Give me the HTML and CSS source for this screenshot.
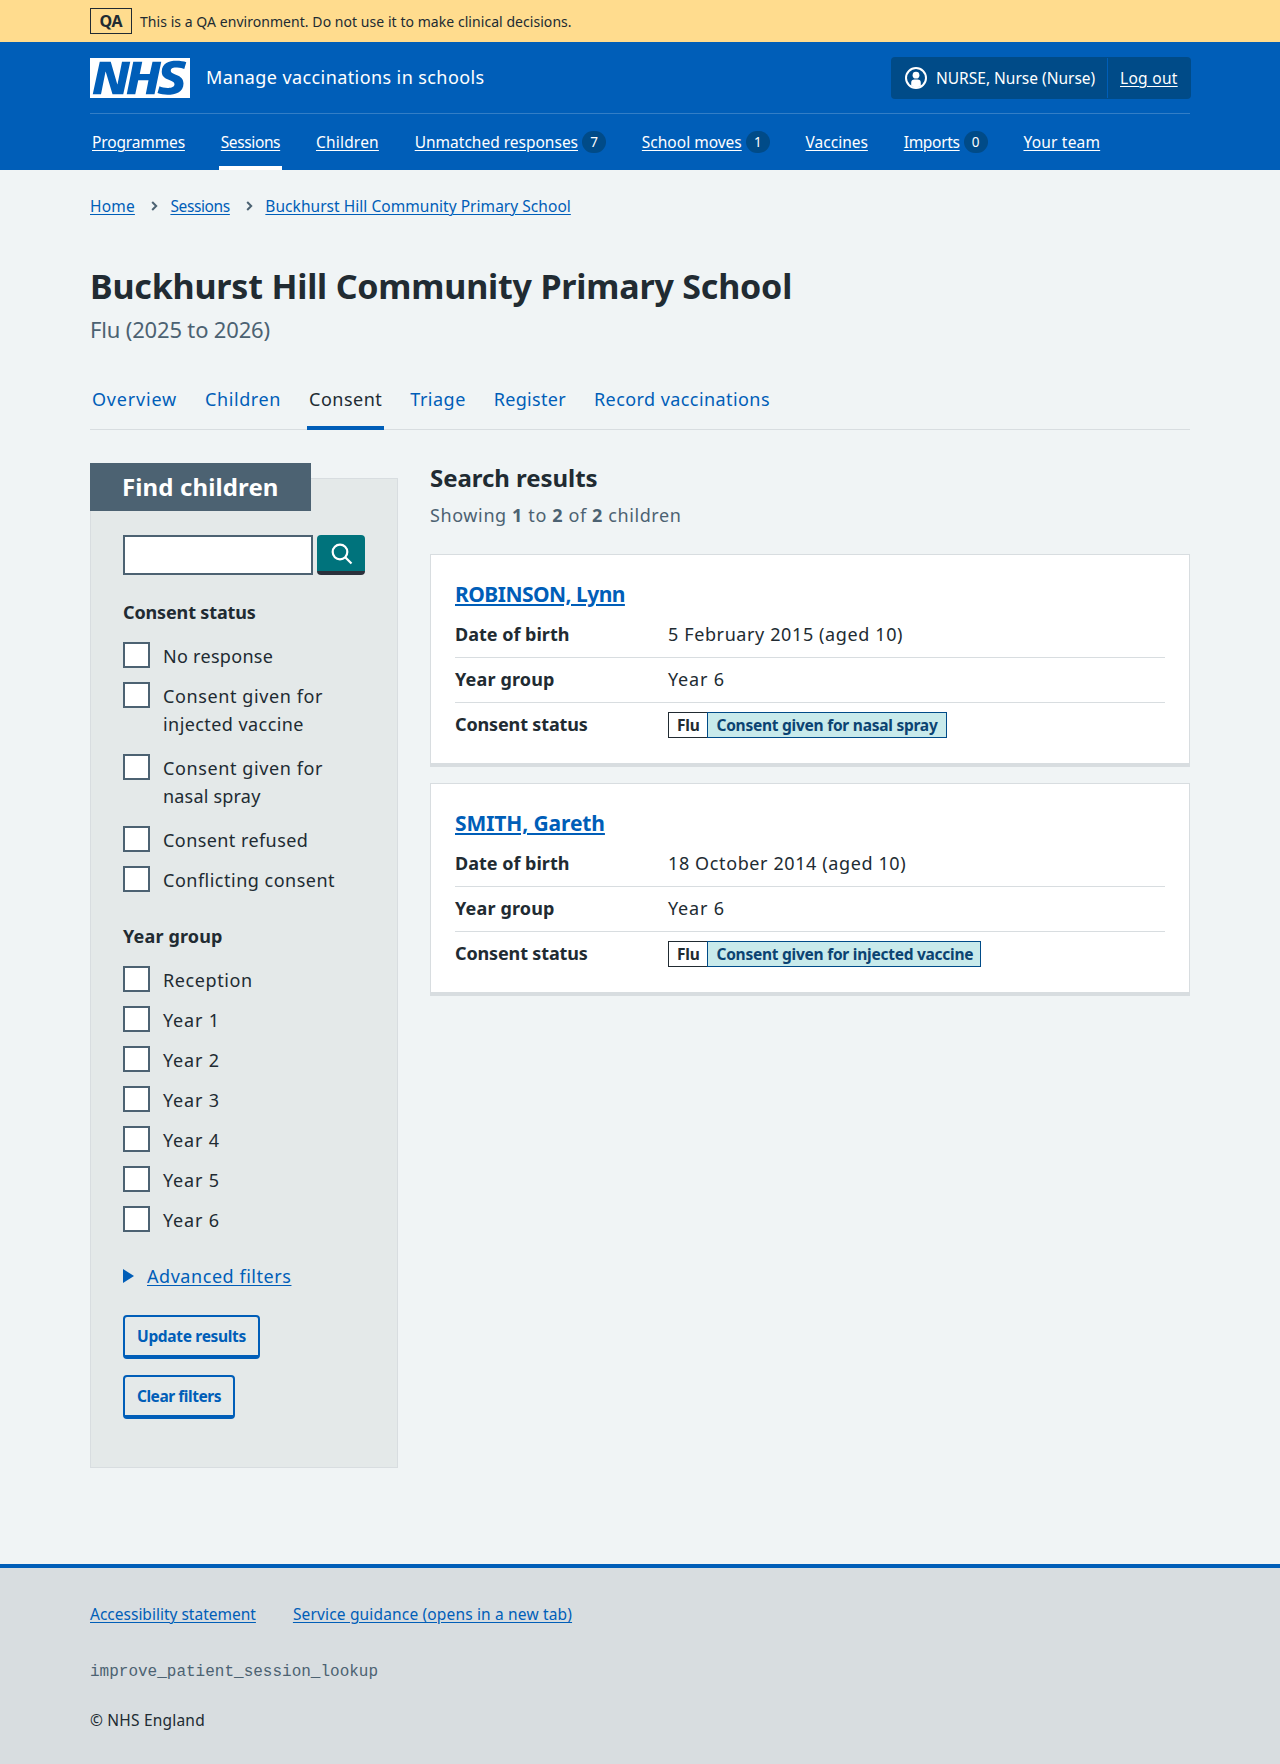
FILE: index.html
```html
<!DOCTYPE html>
<html lang="en">
<head>
<meta charset="utf-8">
<title>Buckhurst Hill Community Primary School – Manage vaccinations in schools</title>
<link rel="stylesheet" href="styles.css">
</head>
<body>
<div class="environment">
  <div class="container environment__inner">
    <strong class="environment__tag">QA</strong>
    <span class="environment__text">This is a QA environment. Do not use it to make clinical decisions.</span>
  </div>
</div>

<header class="header">
  <div class="container">
    <div class="header__top">
      <a class="header__service" href="#">
        <svg class="header__logo" viewBox="0 0 40 16" width="100" height="40" role="img" aria-label="NHS">
          <path fill="#fff" d="M0 0h40v16H0z"/>
          <path fill="#005eb8" d="M3.9 1.5h4.4l2.6 9h.1l1.8-9h3.3l-2.8 13H9l-2.7-9h-.1l-1.8 9H1.1M17.3 1.5h3.6l-1 4.9h4L25 1.5h3.5l-2.7 13h-3.5l1.1-5.6h-4.1l-1.2 5.6h-3.4M37.7 4.4c-.7-.3-1.6-.6-2.9-.6-1.4 0-2.5.2-2.5 1.3 0 1.8 5.1 1.2 5.1 5.1 0 3.6-3.3 4.5-6.4 4.5-1.3 0-2.9-.3-4-.7l.8-2.7c.7.4 2.1.7 3.2.7s2.8-.2 2.8-1.5c0-2.1-5.1-1.3-5.1-5 0-3.4 2.9-4.4 5.8-4.4 1.6 0 3.1.2 4 .6"/>
        </svg>
        <span class="header__name">Manage vaccinations in schools</span>
      </a>
      <div class="account">
        <div class="account__item account__item--user">
          <svg width="22" height="22" viewBox="0 0 22 22" aria-hidden="true">
            <circle cx="11" cy="11" r="10" fill="none" stroke="#fff" stroke-width="2"/>
            <circle cx="11" cy="8.2" r="3.4" fill="#fff"/>
            <path fill="#fff" d="M6.2 19v-3.200a3.300 3.300 0 0 1 3.300-3.300h3a3.300 3.300 0 0 1 3.300 3.300V19L11 21z"/>
          </svg>
          <span>NURSE, Nurse (Nurse)</span>
        </div>
        <div class="account__item account__item--logout"><a class="loose-30" href="#">Log out</a></div>
      </div>
    </div>
    <nav class="nav">
      <div class="nav__item"><a class="tight-15" href="#">Programmes</a></div>
      <div class="nav__item nav__item--current"><a class="tight-35" href="#">Sessions</a></div>
      <div class="nav__item"><a class="loose-20" href="#">Children</a></div>
      <div class="nav__item"><a href="#">Unmatched responses</a><span class="nav__count">7</span></div>
      <div class="nav__item"><a href="#">School moves</a><span class="nav__count">1</span></div>
      <div class="nav__item"><a href="#">Vaccines</a></div>
      <div class="nav__item"><a class="tight-30" href="#">Imports</a><span class="nav__count">0</span></div>
      <div class="nav__item"><a class="loose-20" href="#">Your team</a></div>
    </nav>
  </div>
</header>

<div class="container content">
  <nav class="breadcrumb">
    <a class="loose-20" href="#">Home</a>
    <svg class="breadcrumb__chevron" width="7" height="10" viewBox="0 0 7 10" aria-hidden="true"><path d="M1.200 1l4 4-4 4"/></svg>
    <a class="tight-35" href="#">Sessions</a>
    <svg class="breadcrumb__chevron" width="7" height="10" viewBox="0 0 7 10" aria-hidden="true"><path d="M1.200 1l4 4-4 4"/></svg>
    <a class="loose-5" href="#">Buckhurst Hill Community Primary School</a>
  </nav>

  <h1 class="title">Buckhurst Hill Community Primary School</h1>
  <p class="caption">Flu (2025 to 2026)</p>

  <nav class="tabs">
    <a class="tabs__item loose-80" href="#">Overview</a>
    <a class="tabs__item loose-60" href="#">Children</a>
    <a class="tabs__item tabs__item--current loose-50" href="#">Consent</a>
    <a class="tabs__item loose-50" href="#">Triage</a>
    <a class="tabs__item loose-30" href="#">Register</a>
    <a class="tabs__item loose-45" href="#">Record vaccinations</a>
  </nav>

  <div class="columns">
    <aside class="filters">
      <h2 class="filters__heading">Find children</h2>
      <div class="search">
        <input class="search__input" type="text" aria-label="Search">
        <button class="search__button" aria-label="Search">
          <svg width="22" height="22" viewBox="0 0 22 22" aria-hidden="true"><circle cx="9" cy="9" r="7.300"/><path d="M14.200 14.200L20.500 20.500"/></svg>
        </button>
      </div>

      <h3 class="legend tight-15">Consent status</h3>
      <div class="options">
        <label class="option"><input type="checkbox"><span class="loose-30">No response</span></label>
        <label class="option option--double"><input type="checkbox"><span><span class="loose-60">Consent given for</span><br><span class="loose-45">injected vaccine</span></span></label>
        <label class="option option--double"><input type="checkbox"><span><span class="loose-60">Consent given for</span><br><span class="loose-20">nasal spray</span></span></label>
        <label class="option"><input type="checkbox"><span class="loose-45">Consent refused</span></label>
        <label class="option"><input type="checkbox"><span class="loose-50">Conflicting consent</span></label>
      </div>

      <h3 class="legend loose-15">Year group</h3>
      <div class="options">
        <label class="option"><input type="checkbox"><span class="loose-60">Reception</span></label>
        <label class="option"><input type="checkbox"><span class="loose-80">Year 1</span></label>
        <label class="option"><input type="checkbox"><span class="loose-80">Year 2</span></label>
        <label class="option"><input type="checkbox"><span class="loose-80">Year 3</span></label>
        <label class="option"><input type="checkbox"><span class="loose-80">Year 4</span></label>
        <label class="option"><input type="checkbox"><span class="loose-80">Year 5</span></label>
        <label class="option"><input type="checkbox"><span class="loose-80">Year 6</span></label>
      </div>

      <a class="advanced" href="#"><span class="advanced__arrow"></span><span class="advanced__text loose-55">Advanced filters</span></a>

      <div class="actions">
        <button class="button button--update">Update results</button>
        <button class="button button--clear">Clear filters</button>
      </div>
    </aside>

    <main class="results">
      <h2 class="results__heading">Search results</h2>
      <p class="results__count loose-60">Showing <b>1</b> to <b>2</b> of <b>2</b> children</p>

      <article class="card">
        <h3 class="card__title"><a class="tight-50" href="#">ROBINSON, Lynn</a></h3>
        <dl class="summary">
          <div class="summary__row"><dt>Date of birth</dt><dd class="loose-60">5 February 2015 (aged 10)</dd></div>
          <div class="summary__row"><dt class="loose-15">Year group</dt><dd class="loose-80">Year 6</dd></div>
          <div class="summary__row"><dt class="tight-15">Consent status</dt><dd class="tags"><span class="tag">Flu</span><span class="tag tag--given tag--nasal">Consent given for nasal spray</span></dd></div>
        </dl>
      </article>

      <article class="card">
        <h3 class="card__title"><a class="tight-10" href="#">SMITH, Gareth</a></h3>
        <dl class="summary">
          <div class="summary__row"><dt>Date of birth</dt><dd class="loose-60">18 October 2014 (aged 10)</dd></div>
          <div class="summary__row"><dt class="loose-15">Year group</dt><dd class="loose-80">Year 6</dd></div>
          <div class="summary__row"><dt class="tight-15">Consent status</dt><dd class="tags"><span class="tag">Flu</span><span class="tag tag--given tag--injected">Consent given for injected vaccine</span></dd></div>
        </dl>
      </article>
    </main>
  </div>
</div>

<footer class="footer">
  <div class="container">
    <div class="footer__links">
      <a href="#">Accessibility statement</a>
      <a class="loose-15" href="#">Service guidance (opens in a new tab)</a>
    </div>
    <p class="footer__branch">improve_patient_session_lookup</p>
    <p class="footer__copyright loose-20">© NHS England</p>
  </div>
</footer>
</body>
</html>
```
FILE: styles.css
```css
* { box-sizing: border-box; }

body {
  margin: 0;
  min-height: 1764px;
  display: flex;
  flex-direction: column;
  background: #f0f4f5;
  color: #212b32;
  font: 400 15.5px/24px "Noto Sans", "Open Sans", sans-serif;
}

h1, h2, h3, p, dl, dd { margin: 0; }
h1, h2, h3, b, strong, dt { font-weight: 700; }
a { color: #005eb8; text-underline-offset: 2px; text-decoration-thickness: 1px; }

.container { width: 1100px; margin: 0 auto; }

/* Letter spacing */
.tight-10 { letter-spacing: -.1px; }
.tight-15 { letter-spacing: -.14px; }
.tight-30 { letter-spacing: -.3px; }
.tight-35 { letter-spacing: -.38px; }
.tight-50 { letter-spacing: -.53px; }
.loose-5 { letter-spacing: .04px; }
.loose-15 { letter-spacing: .16px; }
.loose-20 { letter-spacing: .2px; }
.loose-30 { letter-spacing: .29px; }
.loose-45 { letter-spacing: .43px; }
.loose-50 { letter-spacing: .5px; }
.loose-55 { letter-spacing: .55px; }
.loose-60 { letter-spacing: .61px; }
.loose-80 { letter-spacing: .8px; }

/* Environment banner */
.environment { height: 42px; background: #ffdc8e; }
.environment__inner { display: flex; align-items: center; gap: 8px; height: 42px; font-size: 14px; letter-spacing: .05px; }
.environment__tag { width: 42px; height: 26px; border: 1px solid #212b32; font-size: 16px; line-height: 24px; letter-spacing: -.2px; text-align: center; }
.environment__text { padding-top: 2px; }

/* Header */
.header { height: 128px; background: #005eb8; color: #fff; }
.header a { color: #fff; }
.header__top { display: flex; justify-content: space-between; align-items: center; height: 72px; border-bottom: 1px solid #337ec6; }
.header__service { display: flex; align-items: center; gap: 16px; text-decoration: none; }
.header__logo { display: block; }
.header__name { padding-bottom: 1px; font-size: 18px; letter-spacing: .41px; }

.account { display: flex; height: 42px; margin-right: -1px; padding: 1px 0; border-radius: 4px; background: #004b88; }
.account__item { display: flex; align-items: center; padding: 0 12px; }
.account__item--user { width: 217px; gap: 9px; padding: 0 0 0 14px; border-right: 1px solid #005eb8; white-space: nowrap; }
.account__item--logout { width: 83px; }

.nav { display: flex; gap: 31.8px; height: 56px; }
.nav__item { display: flex; align-items: center; padding: 4px 2px 0; border-bottom: 4px solid transparent; white-space: nowrap; }
.nav__item--current { border-color: #fff; }
.nav__count { width: 24px; height: 22px; margin-left: 4px; border-radius: 12px; background: #004b88; font-size: 13.5px; line-height: 23px; text-align: center; }

/* Page heading */
.content { flex: 1; }
.breadcrumb { display: flex; align-items: center; height: 24px; margin-top: 24px; }
.breadcrumb__chevron { margin: 0 12px 0 16.5px; fill: none; stroke: #4c6272; stroke-width: 2; }
.title { margin-top: 46px; font-size: 34px; line-height: 44px; letter-spacing: -.2px; }
.caption { margin-top: 5px; color: #4c6272; font-size: 22px; line-height: 32px; letter-spacing: -.17px; }

.tabs { display: flex; gap: 24px; height: 61px; margin-top: 24px; box-shadow: inset 0 -1px #d8dde0; }
.tabs__item { padding: 16px 2px 0; border-bottom: 4px solid transparent; font-size: 18px; line-height: 28px; text-decoration: none; }
.tabs__item--current { border-color: #005eb8; color: #212b32; }

/* Filters */
.columns { display: flex; align-items: flex-start; gap: 32px; margin-top: 33px; }
.filters { flex: none; width: 308px; height: 990px; margin-top: 15px; padding: 0 32px; border: 1px solid #d8dde0; background: #e4e9e9; font-size: 18px; line-height: 28px; }
.filters__heading { width: 221px; height: 48px; margin: -16px 0 0 -33px; padding-left: 32px; background: #4c6272; color: #fff; font-size: 24px; line-height: 47px; letter-spacing: .12px; }

.search { display: flex; gap: 4px; margin-top: 24px; }
.search__input { width: 190px; height: 40px; border: 2px solid #4c6272; background: #fff; }
.search__button { display: flex; align-items: center; justify-content: center; width: 48px; height: 40px; padding: 2px 0 0 2px; border: 0; border-bottom: 4px solid #2b303b; border-radius: 4px; background: linear-gradient(#00737c, #00737c) padding-box; }
.search__button svg { fill: none; stroke: #fff; stroke-width: 2.200; }

.legend { margin-top: 23px; font-size: 18px; line-height: 28px; }
.options { display: flex; flex-direction: column; gap: 12px; margin-top: 16px; }
.option { display: flex; gap: 13px; }
.option--double { padding-bottom: 4px; }
.option input { appearance: none; flex: none; width: 27px; height: 26px; margin: 0; border: 2px solid #4c6272; background: #fff; }
.options + .legend { margin-top: 28px; }

.advanced { display: flex; align-items: center; gap: 13px; margin-top: 28px; text-decoration: none; }
.advanced__arrow { border: solid transparent; border-width: 7px 0 7px 11px; border-left-color: #005eb8; }
.advanced__text { text-decoration: underline 1px; text-underline-offset: 2px; }

.actions { display: flex; flex-direction: column; gap: 16px; margin-top: 25px; }
.button { height: 44px; padding: 1px 0 0; border: 2px solid #005eb8; border-bottom-width: 4px; border-radius: 4px; background: transparent; color: #005eb8; font: 700 15.5px/37px "Noto Sans", "Open Sans", sans-serif; white-space: nowrap; }
.button--update { width: 137px; letter-spacing: -.32px; }
.button--clear { width: 112px; letter-spacing: -.45px; }

/* Results */
.results { width: 760px; }
.results__heading { font-size: 24px; line-height: 30px; letter-spacing: -.05px; }
.results__count { margin-top: 8px; color: #4c6272; font-size: 18px; line-height: 28px; }
.card { height: 213px; margin-top: 16px; padding: 23px 24px 0; border: 1px solid #d8dde0; border-bottom-width: 4px; background: #fff; }
.results__count + .card { margin-top: 25px; }
.card__title { font-size: 21px; line-height: 32px; }
.card__title a { text-decoration-thickness: 2px; }
.summary { margin-top: 3px; font-size: 18px; line-height: 28px; }
.summary__row { display: grid; grid-template-columns: 213px 1fr; padding: 7px 0 9px; border-bottom: 1px solid #d8dde0; }
.summary__row:last-child { border-bottom: 0; }

.tags { display: flex; padding-top: 2px; }
.tag { height: 26px; padding: 0 8px; border: 1px solid #212b32; border-right: 0; font-size: 15.5px; font-weight: 700; line-height: 24px; letter-spacing: -.25px; white-space: nowrap; }
.tag--given { border: 1px solid #004b88; background: #c8eaeb; color: #0b4372; }
.tag--nasal { width: 240px; }
.tag--injected { width: 274px; }

/* Footer */
.footer { height: 200px; padding-top: 34px; border-top: 4px solid #005eb8; background: #d8dde0; }
.footer__links { display: flex; gap: 37px; }
.footer__branch { margin-top: 34px; color: #4c6272; font-family: "Liberation Mono", monospace; font-size: 16px; }
.footer__copyright { margin-top: 24px; }
```
